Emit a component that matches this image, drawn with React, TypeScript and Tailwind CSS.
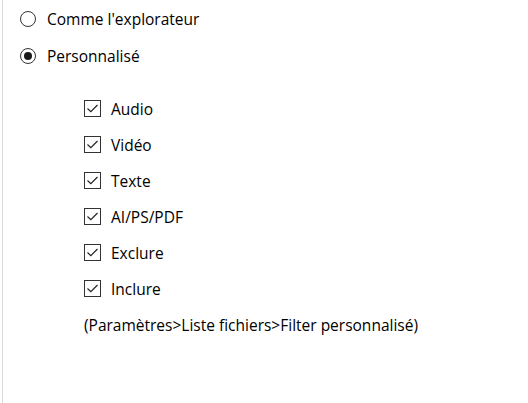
import React from 'react';

const Radio = ({ checked, label }: { checked?: boolean; label: string }) => (
  <div className="flex items-center h-[37px]">
    <div className="w-[16px] h-[16px] rounded-full border border-[#333333] flex items-center justify-center">
      {checked && <div className="w-[8px] h-[8px] rounded-full bg-[#1a1a1a]" />}
    </div>
    <span className="ml-[11px] mt-[2px]">{label}</span>
  </div>
);

const Check = ({ label }: { label: string }) => (
  <div className="flex items-center h-[36px]">
    <div className="w-[17px] h-[17px] border border-[#333333] flex items-center justify-center">
      <svg width="13" height="13" viewBox="0 0 13 13" fill="none">
        <path d="M1.5 6.5 L4.8 9.6 L11.5 3" stroke="#222" strokeWidth="1.2" />
      </svg>
    </div>
    <span className="ml-[10px] mt-[3px]">{label}</span>
  </div>
);

export default function App() {
  return (
    <div className="w-[528px] h-[403px] bg-white pl-[2px] overflow-hidden">
      <div
        className="h-full border-l border-[#d9d9d9] pl-[17px] text-[15.5px] text-black"
        style={{ fontFamily: '"Open Sans", "Noto Sans", sans-serif' }}
      >
        <Radio label="Comme l'explorateur" />
        <Radio checked label="Personnalisé" />
        <div className="mt-[16px] pl-[64px]">
          {['Audio', 'Vidéo', 'Texte', 'AI/PS/PDF', 'Exclure', 'Inclure'].map((l) => (
            <Check key={l} label={l} />
          ))}
          <div className="flex items-center h-[36px] pt-[3px]">
            (Paramètres&gt;Liste fichiers&gt;Filter personnalisé)
          </div>
        </div>
      </div>
    </div>
  );
}
